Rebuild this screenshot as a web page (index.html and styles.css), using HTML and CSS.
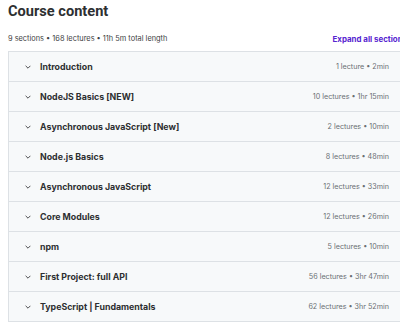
FILE: index.html
```html
<!DOCTYPE html>
<html>
<head>
<meta charset="utf-8">
<link rel="stylesheet" href="styles.css">
</head>
<body>
<div class="page">
  <h2 class="title">Course content</h2>
  <div class="meta">
    <span class="summary">9 sections • 168 lectures • 11h 5m total length</span>
    <span class="expand">Expand all sections</span>
  </div>
  <div class="sections">
    <div class="row"><span class="chev"><svg viewBox="0 0 10 6" width="6" height="4"><path d="M1 1l4 4 4-4" fill="none" stroke="#2d2f31" stroke-width="1.4"/></svg></span><span class="name">Introduction</span><span class="info">1 lecture • 2min</span></div>
    <div class="row"><span class="chev"><svg viewBox="0 0 10 6" width="6" height="4"><path d="M1 1l4 4 4-4" fill="none" stroke="#2d2f31" stroke-width="1.4"/></svg></span><span class="name">NodeJS Basics [NEW]</span><span class="info">10 lectures • 1hr 15min</span></div>
    <div class="row"><span class="chev"><svg viewBox="0 0 10 6" width="6" height="4"><path d="M1 1l4 4 4-4" fill="none" stroke="#2d2f31" stroke-width="1.4"/></svg></span><span class="name">Asynchronous JavaScript [New]</span><span class="info">2 lectures • 10min</span></div>
    <div class="row"><span class="chev"><svg viewBox="0 0 10 6" width="6" height="4"><path d="M1 1l4 4 4-4" fill="none" stroke="#2d2f31" stroke-width="1.4"/></svg></span><span class="name">Node.js Basics</span><span class="info">8 lectures • 48min</span></div>
    <div class="row"><span class="chev"><svg viewBox="0 0 10 6" width="6" height="4"><path d="M1 1l4 4 4-4" fill="none" stroke="#2d2f31" stroke-width="1.4"/></svg></span><span class="name">Asynchronous JavaScript</span><span class="info">12 lectures • 33min</span></div>
    <div class="row"><span class="chev"><svg viewBox="0 0 10 6" width="6" height="4"><path d="M1 1l4 4 4-4" fill="none" stroke="#2d2f31" stroke-width="1.4"/></svg></span><span class="name">Core Modules</span><span class="info">12 lectures • 26min</span></div>
    <div class="row"><span class="chev"><svg viewBox="0 0 10 6" width="6" height="4"><path d="M1 1l4 4 4-4" fill="none" stroke="#2d2f31" stroke-width="1.4"/></svg></span><span class="name">npm</span><span class="info">5 lectures • 10min</span></div>
    <div class="row"><span class="chev"><svg viewBox="0 0 10 6" width="6" height="4"><path d="M1 1l4 4 4-4" fill="none" stroke="#2d2f31" stroke-width="1.4"/></svg></span><span class="name">First Project: full API</span><span class="info">56 lectures • 3hr 47min</span></div>
    <div class="row"><span class="chev"><svg viewBox="0 0 10 6" width="6" height="4"><path d="M1 1l4 4 4-4" fill="none" stroke="#2d2f31" stroke-width="1.4"/></svg></span><span class="name">TypeScript | Fundamentals</span><span class="info">62 lectures • 3hr 52min</span></div>
  </div>
</div>
</body>
</html>
```

FILE: styles.css
```css
html, body {
  margin: 0;
  padding: 0;
  overflow: hidden;
  background: #fff;
}
body {
  font-family: Inter, "Noto Sans", sans-serif;
  color: #2d2f31;
}
.page {
  width: 399px;
  padding-left: 8px;
}
.title {
  margin: 0;
  font-family: Roboto, "Liberation Sans", sans-serif;
  font-size: 14.6px;
  font-weight: 700;
  line-height: 22px;
  height: 26px;
}
.meta {
  display: flex;
  justify-content: space-between;
  align-items: center;
  height: 25px;
}
.summary {
  font-size: 7.4px;
  color: #3e4143;
}
.expand {
  font-size: 7.9px;
  font-weight: 700;
  color: #5624d0;
  white-space: nowrap;
}
.sections {
  border: 1px solid #dde1e5;
  border-bottom: none;
}
.row {
  display: flex;
  align-items: center;
  height: 29px;
  border-bottom: 1px solid #dde1e5;
  background: #f7f9fa;
  padding: 0 17px 0 16px;
}
.chev {
  display: flex;
  width: 15px;
}
.name {
  flex: 1;
  font-size: 8.8px;
  font-weight: 700;
  color: #2d2f31;
}
.info {
  font-size: 7.2px;
  color: #6a6f73;
}
```
